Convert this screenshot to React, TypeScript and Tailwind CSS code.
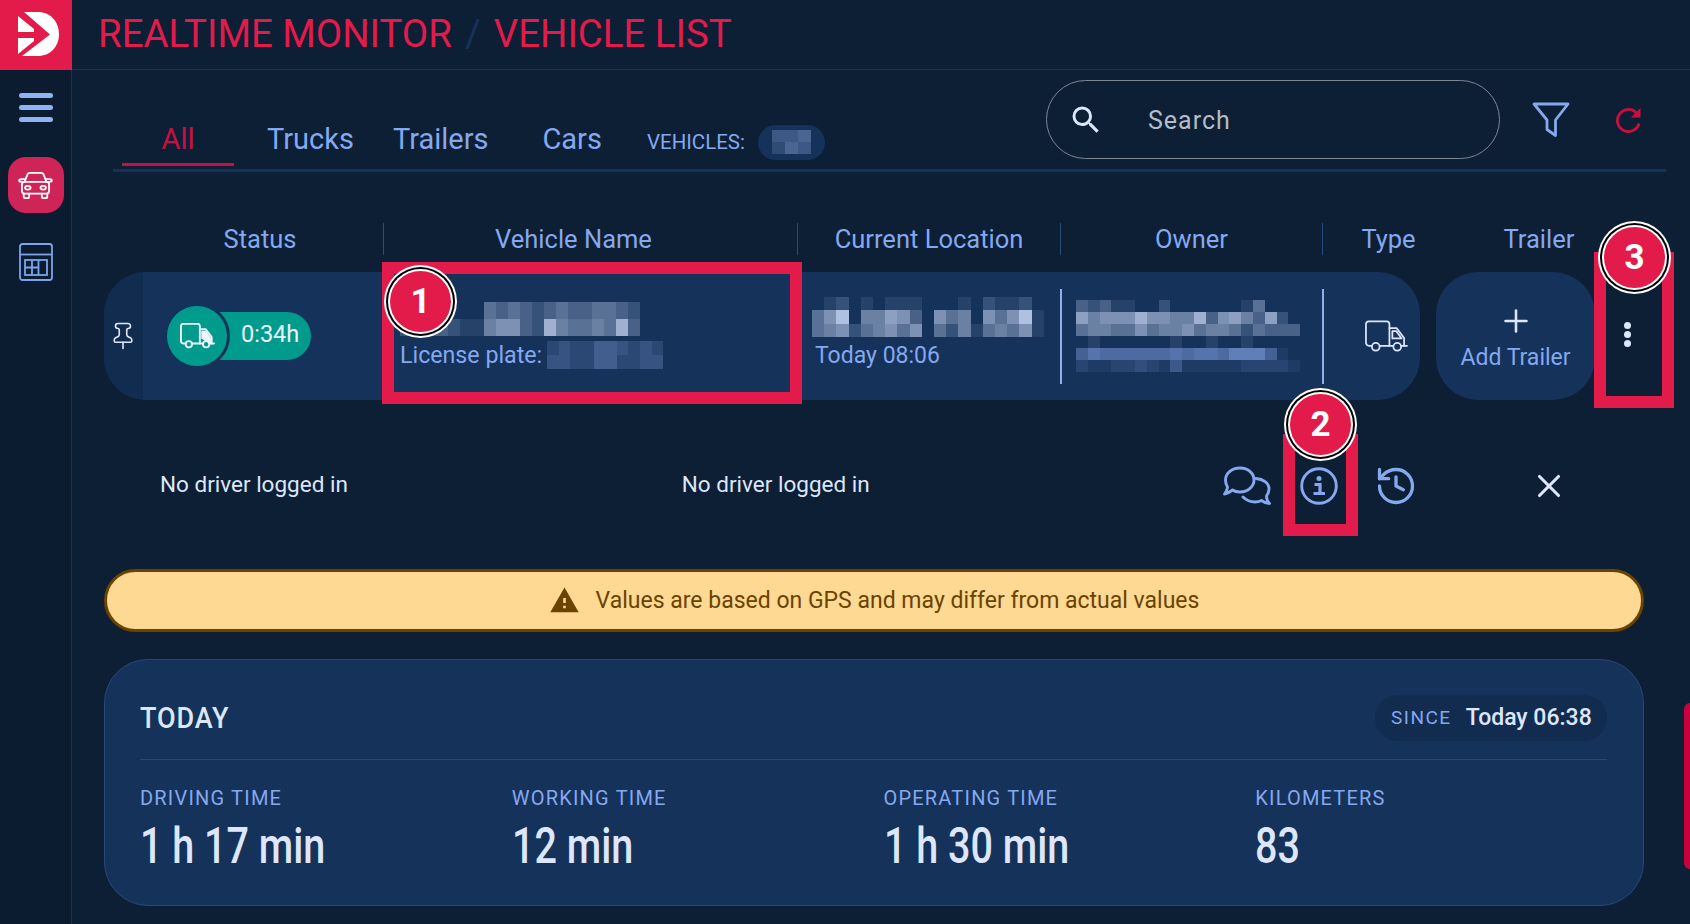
import { History, Pin, Plus, X } from "lucide-react";
import { MdSearch, MdWarning } from "react-icons/md";

// mosaico de los datos tapados: cada dígito es un bloque, 0 = fondo, 9 = más claro
function Mosaic({
  rows,
  to = [176, 192, 224],
  from = [21, 50, 90],
  className,
}: {
  rows: string[];
  to?: number[];
  from?: number[];
  className: string;
}) {
  const tile = (v: number) => {
    const k = v / 9;
    const c = from.map((f, i) => Math.round(f + (to[i] - f) * k));
    return `rgb(${c[0]},${c[1]},${c[2]})`;
  };
  return (
    <div className={`flex flex-col ${className}`}>
      {rows.map((row, r) => (
        <div key={r} className="flex flex-1">
          {row.split("").map((d, i) => (
            <div key={i} className="flex-1" style={{ backgroundColor: tile(Number(d)) }} />
          ))}
        </div>
      ))}
    </div>
  );
}

function Logo() {
  return (
    <svg viewBox="0 0 72 70" className="h-[70px] w-[72px]">
      <path
        fill="#fff"
        d="M24 12H38C50 12 59 21 59 34C59 47 50 56 38 56H22L50 34.500ZM18 16L34 29V32H18ZM18 38H34V41L18 54Z"
      />
    </svg>
  );
}

function CarIcon() {
  return (
    <svg viewBox="0 0 38 32" fill="none" stroke="#fff" strokeWidth="2" strokeLinecap="round" strokeLinejoin="round" className="h-[29px] w-[37px]">
      <path d="M7 12l3-8q.6-2 3-2h12q2.400 0 3 2l3 8" />
      <path d="M7 12H3.500Q1 12 1 10.500T3.500 9H7.500M31 12h3.500Q37 12 37 10.500T34.500 9H30.500" />
      <rect x="4" y="12" width="30" height="13" rx="3" />
      <ellipse cx="10.500" cy="18.500" rx="3" ry="2" />
      <ellipse cx="27.500" cy="18.500" rx="3" ry="2" />
      <path d="M6 25v3q0 2 2 2h2q2 0 2-2v-3M26 25v3q0 2 2 2h2q2 0 2-2v-3" />
    </svg>
  );
}

function CalcIcon() {
  return (
    <svg viewBox="0 0 34 38" fill="none" stroke="#7ea3e8" strokeWidth="1.800" className="h-[38px] w-[34px]">
      <rect x="1" y="1" width="32" height="36" rx="2.500" />
      <path d="M1 11.500H33" />
      <rect x="6" y="17" width="22" height="15" />
      <path d="M13 17V32M19.500 17V32M6 24.500H19.500" />
    </svg>
  );
}

function TruckIcon({ filled, className }: { filled?: boolean; className: string }) {
  return (
    <svg viewBox="0 0 44 33" fill="none" stroke="currentColor" strokeWidth={filled ? 2.4 : 1.800} strokeLinecap="round" strokeLinejoin="round" className={className}>
      <path d="M7 26H4a3 3 0 0 1-3-3V4a3 3 0 0 1 3-3H22a3 3 0 0 1 3 3V26H15" />
      <path d="M25 8H32.500L40 18V26H37M25 26H29" />
      <path d="M28 11h4l5.500 7.500H28z" fill={filled ? "currentColor" : "none"} />
      {filled && <path d="M26 19H40V26H37M26 26H29" fill="currentColor" stroke="none" />}
      <circle cx="11" cy="27" r="4" />
      <circle cx="33" cy="27" r="4" />
      <path d="M40 26H43" />
    </svg>
  );
}

function ChatIcon() {
  return (
    <svg viewBox="0 0 48 39" fill="none" stroke="#85a8ee" strokeWidth="2.900" strokeLinejoin="round" strokeLinecap="round" className="h-[39px] w-[48px]">
      <path d="M17 2C25.500 2 31 7.500 31 14C31 20.500 25 26 17 26C13.500 26 11.500 25.500 9.500 24C7 26 4 27.500 1.500 28C3 26 4.500 23.500 4.500 21C3 19 2.500 16.500 2.500 14C2.500 7.500 8.500 2 17 2Z" />
      <path d="M33 12.500C40 13 46 17 46 23C46 26 45 28 43.500 30C43.500 33 44.500 35.500 46.500 37.500C43 37.500 40.500 36 38.500 34.500C36.500 35.500 34 36 32 36C27.500 36 23 34 20 31" />
    </svg>
  );
}

function InfoIcon() {
  return (
    <svg viewBox="0 0 38 38" fill="none" stroke="#85a8ee" className="h-[38px] w-[38px]">
      <circle cx="19" cy="19" r="17.300" strokeWidth="2.900" />
      <circle cx="19" cy="11.500" r="2.500" fill="#85a8ee" stroke="none" />
      <path d="M14.500 17.500H20V26M13.500 26.500H25" strokeWidth="3.200" />
    </svg>
  );
}

function FilterIcon() {
  return (
    <svg viewBox="0 0 38 36" fill="none" stroke="#85a8ee" strokeWidth="2.800" strokeLinejoin="round" className="h-[36px] w-[38px]">
      <path d="M2 2H36L23.500 18V33.500L15 27.500V18Z" />
    </svg>
  );
}

function RefreshIcon() {
  return (
    <svg viewBox="0 0 28 28" fill="none" stroke="#c8103f" strokeWidth="2.800" className="h-[28px] w-[28px]">
      <path d="M25 17.500A11 11 0 1 1 22 6.500L25 9.500" />
      <path d="M26.500 2V11.500H17Z" fill="#c8103f" stroke="none" />
    </svg>
  );
}

// marcas rojas numeradas que van encima de la captura
function Badge({ n, className }: { n: number; className: string }) {
  return (
    <div className={`absolute h-[73px] w-[73px] rounded-full bg-white p-[2px] ${className}`}>
      <div className="h-full w-full rounded-full bg-black p-[2px]">
        <div className="h-full w-full rounded-full bg-white p-[2px]">
          <div className="flex h-full w-full items-center justify-center rounded-full bg-[#e31b4b] pt-[2px] text-[35px] font-bold text-white">
            {n}
          </div>
        </div>
      </div>
    </div>
  );
}

function Stat({ label, value }: { label: string; value: string }) {
  return (
    <div>
      <div className="text-[20px] leading-[24px] tracking-[1.200px] text-[#85a8ee]">{label}</div>
      <div className="mt-[11px] origin-left scale-x-[0.79] whitespace-nowrap text-[50px] leading-[50px] font-medium text-[#dde6fb]">
        {value}
      </div>
    </div>
  );
}

export default function App() {
  return (
    <div className="relative flex h-[924px] w-[1690px] overflow-hidden bg-[#0d1f35] [font-family:Roboto,sans-serif]">
      {/* barra lateral */}
      <aside className="flex w-[72px] shrink-0 flex-col items-center border-r border-[#15325a] bg-[#0b1c31]">
        <div className="w-[72px] self-start bg-[#e31b4b]">
          <Logo />
        </div>
        <div className="mt-[23px] flex w-[34px] flex-col gap-[7px]">
          <div className="h-[5px] rounded-sm bg-[#8fb2f5]" />
          <div className="h-[5px] rounded-sm bg-[#8fb2f5]" />
          <div className="h-[5px] rounded-sm bg-[#8fb2f5]" />
        </div>
        <div className="mt-[35px] flex h-[56px] w-[56px] items-center justify-center rounded-[18px] bg-[#cf2457]">
          <CarIcon />
        </div>
        <div className="mt-[30px]">
          <CalcIcon />
        </div>
      </aside>

      <main className="min-w-0 flex-1">
        {/* título */}
        <header className="flex h-[70px] items-center gap-[13px] border-b border-[#15325a] pb-[2px] pl-[26px] text-[38.400px] text-[#e31b4b]">
          <span>REALTIME MONITOR</span>
          <span className="text-[#15325a]">/</span>
          <span>VEHICLE LIST</span>
        </header>

        <div className="pr-[46px] pl-[32px]">
          {/* pestañas */}
          <div className="mr-[-22px] ml-[9px] flex items-end border-b-[3px] border-[#15325a] pt-[10px] pb-[10px]">
            <div className="mb-[-7px] ml-[9px] flex items-center">
              <div className="flex h-[58px] w-[112px] items-center justify-center border-b-[3px] border-[#c80f44] pt-[8px] text-[29px] text-[#c80f44]">
                All
              </div>
              <div className="ml-[33px] flex items-center pt-[6px] text-[29px] text-[#85a8ee]">
                <span>Trucks</span>
                <span className="ml-[39px]">Trailers</span>
                <span className="ml-[54px]">Cars</span>
                <span className="mt-[4px] ml-[45px] text-[20.500px]">VEHICLES:</span>
                <div className="mt-[4px] ml-[13px] flex h-[35px] w-[67px] items-center justify-center rounded-full bg-[#15325a]">
                  <Mosaic rows={["334", "243"]} to={[140, 165, 215]} className="h-[24px] w-[40px]" />
                </div>
              </div>
            </div>
            <div className="ml-auto flex items-center">
              <div className="flex h-[79px] w-[454px] items-center rounded-full border border-[#7d8794] pl-[21px] text-[#dde6fb]">
                <MdSearch className="h-[36px] w-[36px]" />
                <span className="mt-[3px] ml-[44px] text-[25px] tracking-[1px] text-[#b4bcc9]">Search</span>
              </div>
              <div className="ml-[32px]">
                <FilterIcon />
              </div>
              <div className="mr-[24px] ml-[44px]">
                <RefreshIcon />
              </div>
            </div>
          </div>

          {/* cabecera de la tabla */}
          <div className="mt-[51px] flex h-[32px] items-center text-center text-[25.500px] leading-[32px] text-[#85a8ee]">
            <div className="w-[279px] pl-[33px]">Status</div>
            <div className="w-[414px] border-l border-[#2a4a7c] pr-[34px]">Vehicle Name</div>
            <div className="w-[263px] border-l border-[#2a4a7c]">Current Location</div>
            <div className="w-[262px] border-l border-[#2a4a7c]">Owner</div>
            <div className="w-[132px] border-l border-[#2a4a7c]">Type</div>
            <div className="w-[170px]">Trailer</div>
          </div>

          {/* fila del vehículo */}
          <div className="mt-[17px] flex h-[128px]">
            <div className="flex w-[1316px] overflow-hidden rounded-[42px] bg-[#15325a]">
              <div className="flex w-[39px] items-center justify-center bg-[#122c50] pr-[2px] text-[#dde6fb]">
                <Pin className="h-[30px] w-[30px]" strokeWidth={1.300} />
              </div>
              <div className="flex w-[240px] items-center pl-[24px]">
                <div className="relative z-10 flex h-[60px] w-[60px] items-center justify-center rounded-full bg-[#009b8c] text-[#eef3fd] ring-[3px] ring-[#15325a]">
                  <TruckIcon filled className="h-[26px] w-[35px]" />
                </div>
                <div className="ml-[-18px] flex h-[48px] w-[102px] items-center rounded-r-full bg-[#009b8c] pb-[2px] pl-[32px] text-[23.500px] text-[#eef3fd]">
                  0:34h
                </div>
              </div>
              <div className="w-[414px] pt-[30px] pl-[17px]">
                <Mosaic
                  rows={["00000004343234334432", "22232115663285445483"]}
                  className="h-[34px] w-[240px]"
                />
                <div className="mt-[2px] flex items-center text-[23.200px] text-[#85a8ee]">
                  <span>License plate:</span>
                  <Mosaic
                    rows={["2322443232", "3322442233"]}
                    to={[120, 150, 210]}
                    className="ml-[5px] h-[28px] w-[116px]"
                  />
                </div>
              </div>
              <div className="w-[263px] pt-[25px] pl-[15px]">
                <Mosaic
                  rows={["0120101110001021120", "4690557630645064691", "4562456460425145461"]}
                  className="h-[40px] w-[232px]"
                />
                <div className="mt-[2px] pl-[3px] text-[23px] text-[#85a8ee]">Today 08:06</div>
              </div>
              <div className="flex w-[262px] items-center">
                <div className="h-[95px] w-[2px] bg-[#8fb0ef]" />
                <div className="ml-[14px] flex flex-col">
                  <Mosaic
                    rows={["3231100200000014000", "7566686655836753720", "4554464556455424333", "0100000010010010000"]}
                    className="h-[48px] w-[224px]"
                  />
                  <Mosaic
                    rows={["5766666676776888510", "2112232141111122221"]}
                    to={[105, 135, 195]}
                    className="h-[24px] w-[224px]"
                  />
                </div>
              </div>
              <div className="flex flex-1 items-center">
                <div className="h-[95px] w-[1.500px] bg-[#8fb0ef]" />
                <TruckIcon className="ml-[41px] h-[33px] w-[43px] text-[#dde6fb]" />
              </div>
            </div>
            <div className="ml-[16px] flex h-full w-[159px] shrink-0 flex-col items-center rounded-[42px] bg-[#15325a] pt-[31px] text-[#85a8ee]">
              <Plus className="h-[36px] w-[36px] text-[#dde6fb]" strokeWidth={1.700} />
              <span className="mt-[2px] text-[23px]">Add Trailer</span>
            </div>
            <div className="ml-[29px] flex flex-col items-center gap-[2px] self-center pb-[3px]">
              <div className="h-[7px] w-[7px] rounded-full bg-[#dde6fb]" />
              <div className="h-[7px] w-[7px] rounded-full bg-[#dde6fb]" />
              <div className="h-[7px] w-[7px] rounded-full bg-[#dde6fb]" />
            </div>
          </div>

          {/* conductores y acciones */}
          <div className="flex h-[169px] items-center text-[22.500px] text-[#dde6fb]">
            <span className="ml-[56px]">No driver logged in</span>
            <span className="ml-[334px]">No driver logged in</span>
            <div className="mt-[2px] ml-[353px]">
              <ChatIcon />
            </div>
            <div className="mt-[2px] ml-[29px]">
              <InfoIcon />
            </div>
            <History className="mt-[2px] ml-[36px] h-[44px] w-[44px] text-[#85a8ee]" strokeWidth={1.800} />
            <X className="mt-[2px] ml-[112px] h-[38px] w-[38px]" strokeWidth={2} />
          </div>

          {/* aviso GPS */}
          <div className="flex h-[63px] items-center justify-center gap-[16px] rounded-full border-[3px] border-[#6b4300] bg-[#fdd994] text-[23px] text-[#6b4300]">
            <MdWarning className="h-[31px] w-[31px]" />
            <span className="pt-[2px]">Values are based on GPS and may differ from actual values</span>
          </div>

          {/* resumen del día */}
          <section className="mt-[27px] h-[247px] rounded-[44px] border border-[#28487a] bg-[#15325a] pt-[35px] pr-[36px] pl-[35px]">
            <div className="flex h-[65px] items-start justify-between border-b border-[#28487a]">
              <span className="mt-[5px] origin-left scale-x-[0.9] text-[30px] leading-[36px] font-medium tracking-[1px] text-[#dde6fb]">TODAY</span>
              <div className="flex h-[46px] w-[232px] items-center rounded-full bg-[#122c50] pl-[16px]">
                <span className="text-[19px] tracking-[1.500px] text-[#85a8ee]">SINCE</span>
                <span className="ml-[14px] text-[23px] font-medium text-[#dde6fb]">Today 06:38</span>
              </div>
            </div>
            <div className="mt-[26px] grid grid-cols-4 gap-5">
              <Stat label="DRIVING TIME" value="1 h 17 min" />
              <Stat label="WORKING TIME" value="12 min" />
              <Stat label="OPERATING TIME" value="1 h 30 min" />
              <Stat label="KILOMETERS" value="83" />
            </div>
          </section>
        </div>
      </main>

      {/* barra roja al borde derecho */}
      <div className="absolute top-[703px] right-0 h-[166px] w-[6px] rounded-l-md bg-[#c80040]" />

      {/* anotaciones */}
      <div className="absolute top-[262px] left-[382px] h-[142px] w-[420px] border-[12px] border-[#e31b4b]" />
      <div className="absolute top-[434px] left-[1283px] h-[102px] w-[75px] border-[12px] border-[#e31b4b]" />
      <div className="absolute top-[252px] left-[1594px] h-[156px] w-[80px] border-[12px] border-[#e31b4b]" />
      <Badge n={1} className="top-[265px] left-[384px]" />
      <Badge n={2} className="top-[388px] left-[1284px]" />
      <Badge n={3} className="top-[221px] left-[1598px]" />
    </div>
  );
}
